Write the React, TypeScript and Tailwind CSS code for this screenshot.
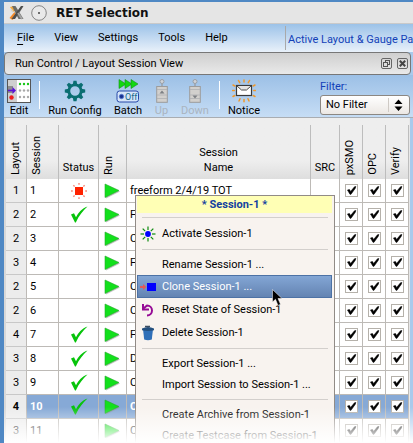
import React from "react";

type Status = "active" | "done" | "none";

interface Session {
  layout: number;
  id: number;
  status: Status;
  name: string;
  selected?: boolean;
}

const sessions: Session[] = [
  { layout: 1, id: 1, status: "active", name: "freeform 2/4/19 TOT" },
  { layout: 2, id: 2, status: "done", name: "F" },
  { layout: 2, id: 3, status: "none", name: "C" },
  { layout: 3, id: 4, status: "none", name: "F" },
  { layout: 2, id: 5, status: "none", name: "C" },
  { layout: 2, id: 6, status: "none", name: "C" },
  { layout: 4, id: 7, status: "done", name: "F" },
  { layout: 3, id: 8, status: "done", name: "D" },
  { layout: 3, id: 9, status: "done", name: "C" },
  { layout: 4, id: 10, status: "done", name: "C", selected: true },
  { layout: 3, id: 11, status: "none", name: "C" },
];

const rayAngles = [0, 45, 90, 135, 180, 225, 270, 315];

function LogoIcon() {
  return (
    <svg width="16" height="16" viewBox="0 0 16 16" aria-hidden="true">
      <path d="M1 2l4-1 2 4-3 2z" fill="#f3a93c" />
      <path d="M0.5 13l5-6 2 4-4 4z" fill="#f08a2a" />
      <path d="M10 3l4-1-3 5z" fill="#b9b9b9" />
      <path d="M3 1h3.5l8 13h-5z" fill="#6b6b66" />
      <path d="M12 1h2.5L6 14H2.5z" fill="#4e4e4c" />
      <path d="M9 8l4 6" stroke="#a6a6a6" strokeWidth="2" />
      <path d="M2 4l2 3" stroke="#d9d3c4" strokeWidth="1.5" />
    </svg>
  );
}

function EditIcon() {
  return (
    <svg width="24" height="24" viewBox="0 0 24 24" aria-hidden="true">
      <rect x="0.5" y="0.5" width="23" height="23" fill="#ffffff" stroke="#555555" />
      <rect x="1" y="1" width="9" height="22" fill="#cfcfcf" />
      <rect x="1" y="7" width="5" height="7" fill="#8e8e8e" />
      <path d="M1 11.5h6" stroke="#5a10d8" strokeWidth="1.6" />
      <path d="M5.5 8l3.5 3.5L5.5 15z" fill="#5a10d8" />
      <circle cx="4.5" cy="18.5" r="2.2" fill="#ee1c1c" />
      {[13, 17, 21].map((x) => (
        <g key={x}>
          <circle cx={x} cy="5" r="1.2" fill="#19c619" />
          <circle cx={x} cy="11.5" r="1.2" fill="#a8a8a8" />
          <circle cx={x} cy="18" r="1.2" fill="#a8a8a8" />
        </g>
      ))}
    </svg>
  );
}

function GearIcon() {
  return (
    <svg width="22" height="24" viewBox="-11 -12 22 24" aria-hidden="true">
      <g fill="#0b6e72">
        {rayAngles.map((a) => (
          <path key={a} d="M-2.2 -6.5L-1.5 -10.2H1.5L2.2 -6.5z" transform={`rotate(${a})`} />
        ))}
      </g>
      <circle r="6.2" fill="none" stroke="#0b6e72" strokeWidth="2.8" />
    </svg>
  );
}

function BatchIcon() {
  return (
    <svg width="24" height="24" viewBox="0 0 24 24" aria-hidden="true">
      <g fill="#12d812" stroke="#178f17" strokeWidth="0.6">
        <path d="M3 0.5l7 4.5-7 4.5z" />
        <path d="M9 0.5l7 4.5-7 4.5z" />
        <path d="M15 0.5l7 4.5-7 4.5z" />
      </g>
      <rect x="1" y="12" width="21.5" height="11" rx="2.5" fill="#d5e5f9" stroke="#2749a8" />
      <circle cx="5.5" cy="17.5" r="2.2" fill="#17308f" stroke="#5f7fd0" />
      <text x="9" y="21" fontSize="9" fontFamily="Roboto, sans-serif" fill="#176a8a">
        Off
      </text>
    </svg>
  );
}

function LiftIcon({ down = false }: { down?: boolean }) {
  return (
    <svg width="12" height="24" viewBox="0 0 12 24" aria-hidden="true">
      <circle cx="6" cy="2.5" r="2" fill="#cfd3d8" stroke="#9b9fa5" />
      <path d="M6 4.5V8" stroke="#9b9fa5" strokeWidth="1.4" />
      <rect x="0.7" y="7.5" width="10.6" height="15.8" fill="#d2d0cd" stroke="#9c9c9c" />
      <path d="M1 10.5h10M1 16h10M1 19.5h10" stroke="#aeb0b2" strokeWidth="0.8" />
      <path d={down ? "M3.5 16.5h5L6 19.5z" : "M3.5 14.5h5L6 11.5z"} fill="#7d8084" />
    </svg>
  );
}

function NoticeIcon() {
  return (
    <svg width="24" height="24" viewBox="0 0 24 24" aria-hidden="true">
      <g stroke="#f0992c" strokeWidth="1.5" strokeLinecap="round">
        <path d="M12 1v2M6.5 1.5l1.2 2.2M17.5 1.5l-1.2 2.2M1 6l1.8 1M23 6l-1.8 1M0.5 11.5h1.8M21.7 11.5h1.8M1 17.5l1.8-1M23 17.5l-1.8-1M7 22l1-2.3M12 22.8v-2.3M17 22l-1-2.3" />
      </g>
      <rect x="4.5" y="6.5" width="15" height="10" fill="#ffffff" stroke="#3a3a3a" strokeWidth="1.2" />
      <path d="M5 7l4.5 4h5L19 7" fill="#e3e3e3" stroke="#4a4a4a" />
    </svg>
  );
}

function RedBurst() {
  return (
    <svg width="18" height="18" viewBox="-9 -9 18 18" aria-hidden="true">
      <rect x="-4" y="-4" width="8" height="8" fill="#ff2200" />
      {rayAngles.map((a) => (
        <path key={a} d="M0 -6.2V-8" stroke="#f58a7a" strokeWidth="1.4" transform={`rotate(${a})`} />
      ))}
    </svg>
  );
}

function StatusCheck() {
  return (
    <svg width="18" height="17" viewBox="0 0 18 17" aria-hidden="true">
      <path
        d="M1 8.5L4 7.3L6 11.2C8.5 6.5 12 2.5 17.5 0.5C13 4.5 9 9.5 5.8 16.5H5z"
        fill="#06c40a"
      />
    </svg>
  );
}

function RunArrow() {
  return (
    <svg width="17" height="16" viewBox="0 0 17 16" aria-hidden="true">
      <path d="M2 2l14 6.5-14 7z" fill="#8c8c8c" opacity="0.5" />
      <path d="M1 1l14 6.5-14 7z" fill="#12e01c" stroke="#27a82b" strokeWidth="0.6" />
    </svg>
  );
}

function ActivateIcon() {
  return (
    <svg width="16" height="16" viewBox="-8 -8 16 16" aria-hidden="true">
      {rayAngles.map((a) => (
        <path key={a} d="M0 -4V-7.5" stroke="#0b8a0b" strokeWidth="1.2" transform={`rotate(${a})`} />
      ))}
      <circle r="2.9" fill="#0000ff" />
    </svg>
  );
}

function CloneIcon() {
  return (
    <svg width="16" height="16" viewBox="0 0 16 16" aria-hidden="true">
      <path d="M0 8h3" stroke="#e05a5a" strokeWidth="2" />
      <path d="M3 5l3.5 3L3 11z" fill="#e05a5a" />
      <rect x="7" y="4" width="9" height="8" fill="#0000ff" />
    </svg>
  );
}

function ResetIcon() {
  return (
    <svg width="16" height="16" viewBox="0 0 16 16" aria-hidden="true">
      <path d="M3.5 6.5L7 3.5A4.8 4.8 0 1 1 7 13.5" fill="none" stroke="#960a96" strokeWidth="2" />
      <path d="M3 2v5.5h6" fill="none" stroke="#960a96" strokeWidth="2" />
    </svg>
  );
}

function TrashIcon() {
  return (
    <svg width="16" height="16" viewBox="0 0 16 16" aria-hidden="true">
      <path d="M3 4h10l-1.2 10.5q-3.8 1.5-7.6 0z" fill="#2f6fb8" />
      <path d="M2 3.5q6-3 12 0v1.7q-6 1.5-12 0z" fill="#24507f" />
      <path d="M5 1.5h5" stroke="#3c4f63" strokeWidth="1.5" />
    </svg>
  );
}

function Tick({ label }: { label: string }) {
  return (
    <span className="mx-auto grid size-[13px] place-items-center">
      <input
        type="checkbox"
        defaultChecked
        aria-label={label}
        className="col-start-1 row-start-1 size-[13px] appearance-none border border-[#b5b1aa] bg-white"
      />
      <svg
        width="11"
        height="11"
        viewBox="0 0 11 11"
        className="pointer-events-none col-start-1 row-start-1"
        aria-hidden="true"
      >
        <path
          d="M1.5 5L3.5 4.6L4.6 6.5L8.5 1.8L9.8 1.5L9.3 3.2L5 9.3H4z"
          fill="#000000"
          stroke="#000000"
          strokeWidth="0.6"
        />
      </svg>
    </span>
  );
}

function ToolButton({
  label,
  width,
  disabled,
  children,
}: {
  label: string;
  width: string;
  disabled?: boolean;
  children: React.ReactNode;
}) {
  return (
    <button
      type="button"
      disabled={disabled}
      className={`flex flex-col items-center whitespace-nowrap disabled:text-[#aab4bf] ${width}`}
    >
      {children}
      <span className="leading-4">{label}</span>
    </button>
  );
}

function ToolDivider() {
  return <span className="mt-0.5 h-7 w-px bg-white" />;
}

function HeaderCell({ label, vertical }: { label: React.ReactNode; vertical?: boolean }) {
  return (
    <th scope="col" className="h-[61px] p-0 align-bottom font-normal">
      <div
        className={`flex h-[54px] items-end border-r border-[#bdbdbd] pb-1 ${
          vertical ? "justify-start pl-0.5" : "justify-center"
        }`}
      >
        {vertical ? (
          <span className="rotate-180 leading-4 whitespace-nowrap [writing-mode:vertical-rl]">{label}</span>
        ) : (
          <span className="leading-[15px]">{label}</span>
        )}
      </div>
    </th>
  );
}

function SessionTable() {
  const cell = "border-r border-b border-[#bdbab6] p-0";
  return (
    <table className="w-full table-fixed border-separate border-spacing-0 bg-white">
      <colgroup>
        <col className="w-[21px]" />
        <col className="w-[32px]" />
        <col className="w-[40px]" />
        <col className="w-[28px]" />
        <col />
        <col className="w-[29px]" />
        <col className="w-[23px]" />
        <col className="w-[23px]" />
        <col className="w-[23px]" />
      </colgroup>
      <thead className="bg-linear-to-b from-[#eeeeee] from-70% to-[#dedede]">
        <tr>
          <HeaderCell label="Layout" vertical />
          <HeaderCell label="Session" vertical />
          <HeaderCell label="Status" />
          <HeaderCell label="Run" vertical />
          <HeaderCell
            label={
              <>
                Session
                <br />
                Name
              </>
            }
          />
          <HeaderCell label="SRC" />
          <HeaderCell label="pxSMO" vertical />
          <HeaderCell label="OPC" vertical />
          <HeaderCell label="Verify" vertical />
        </tr>
      </thead>
      <tbody>
        {sessions.map((s) => (
          <tr key={s.id} className={`h-6 ${s.selected ? "bg-[#86a9d6] font-bold text-white" : ""}`}>
            <th
              scope="row"
              className={`border-r border-b border-r-[#bdbab6] border-b-[#c8c8c8] bg-[#ececec] p-0 pt-0.5 text-center text-black ${
                s.selected ? "font-bold" : "font-normal"
              }`}
            >
              {s.layout}
            </th>
            <td className={`${cell} pt-0.5 pl-[3px]`}>{s.id}</td>
            <td className={cell}>
              <div className="flex justify-center">
                {s.status === "active" && <RedBurst />}
                {s.status === "done" && <StatusCheck />}
              </div>
            </td>
            <td className={cell}>
              <button type="button" aria-label={`Run session ${s.id}`} className="mx-auto block">
                <RunArrow />
              </button>
            </td>
            <td className={`${cell} pt-0.5 pl-[3px] whitespace-nowrap`}>{s.name}</td>
            <td className={cell} />
            {["pxSMO", "OPC", "Verify"].map((step) => (
              <td key={step} className={cell}>
                <Tick label={`${step} for session ${s.id}`} />
              </td>
            ))}
          </tr>
        ))}
      </tbody>
    </table>
  );
}

function MenuItem({
  label,
  icon,
  highlighted,
}: {
  label: string;
  icon?: React.ReactNode;
  highlighted?: boolean;
}) {
  return (
    <button
      type="button"
      role="menuitem"
      className={`flex w-full items-center border pl-0.5 text-left whitespace-nowrap ${icon ? "h-[23px]" : "h-[21px]"} ${
        highlighted
          ? "border-[#4d72a5] bg-linear-to-b from-[#83a6d5] to-[#6484b2] text-white"
          : "border-transparent"
      }`}
    >
      <span className="w-[22px] shrink-0">{icon}</span>
      <span className="pt-0.5">{label}</span>
    </button>
  );
}

function MenuRule() {
  return (
    <div role="separator" className="py-1 pr-1 pl-[5px]">
      <div className="h-px bg-[#d3cfcc]" />
    </div>
  );
}

function ContextMenu() {
  return (
    <div
      role="menu"
      aria-label="Session-1"
      className="absolute top-[195px] left-[135px] w-[200px] border border-[#918b86] bg-[#f8f3ef] pr-0.5 pl-px"
    >
      <div className="bg-[#ffffb5] pt-px text-center leading-4 font-bold text-[#123ea0]">* Session-1 *</div>
      <MenuRule />
      <MenuItem label="Activate Session-1" icon={<ActivateIcon />} />
      <MenuRule />
      <MenuItem label="Rename Session-1 ..." />
      <MenuItem label="Clone Session-1 ..." icon={<CloneIcon />} highlighted />
      <MenuItem label="Reset State of Session-1" icon={<ResetIcon />} />
      <MenuItem label="Delete Session-1" icon={<TrashIcon />} />
      <MenuRule />
      <MenuItem label="Export Session-1 ..." />
      <MenuItem label="Import Session to Session-1 ..." />
      <MenuRule />
      <MenuItem label="Create Archive from Session-1" />
      <MenuItem label="Create Testcase from Session-1" />
    </div>
  );
}

export default function App() {
  return (
    <div className="relative h-screen overflow-hidden border-t-2 border-l-4 border-[#4f88c4] bg-[#a9caec] font-[Roboto,'Noto_Sans',sans-serif] text-[11px] text-black">
      <header className="flex h-[22px] items-center border-b border-[#c9c9c9] bg-[#e5e5e5] pl-[5px]">
        <LogoIcon />
        <button type="button" aria-label="Window menu" className="ml-1.5">
          <svg width="16" height="16" viewBox="0 0 16 16" aria-hidden="true">
            <circle cx="8" cy="8" r="7.3" fill="#e9e9e9" stroke="#858585" />
            <circle cx="8" cy="8" r="1" fill="#444444" />
          </svg>
        </button>
        <h1 className="ml-[9px] font-['DejaVu_Sans',sans-serif] text-[12px] font-bold text-[#111111]">RET Selection</h1>
      </header>

      <div className="flex h-7 items-center bg-linear-to-b from-[#9cc2e8] to-[#e9f1fa]">
        <nav className="flex w-[281px] shrink-0 gap-5 pl-[13px]">
          <button type="button">
            <span className="underline underline-offset-3">F</span>ile
          </button>
          <button type="button">View</button>
          <button type="button">Settings</button>
          <button type="button">Tools</button>
          <button type="button">Help</button>
        </nav>
        <div className="flex h-6 items-center overflow-hidden border-l border-[#a9a9a9] pt-1 pl-0.5">
          <a href="#layout" className="whitespace-nowrap text-[#123fb8]">
            Active Layout &amp; Gauge Pa
          </a>
        </div>
      </div>

      <div className="mr-0.5 flex h-[23px] items-center gap-[5px] rounded-sm border border-[#777777] bg-linear-to-b from-[#cfcfcf] to-[#e9e9e9] pr-0.5 pl-2.5">
        <h2 className="mr-auto pt-0.5">Run Control / Layout Session View</h2>
        <button type="button" aria-label="Float panel">
          <svg width="11" height="11" viewBox="0 0 11 11" aria-hidden="true">
            <rect x="0.5" y="0.5" width="10" height="10" rx="1.5" fill="none" stroke="#666666" />
            <rect x="4.5" y="2.5" width="4" height="4" fill="none" stroke="#555555" />
            <rect x="2.5" y="4.5" width="4" height="4" fill="#dddddd" stroke="#555555" />
          </svg>
        </button>
        <button type="button" aria-label="Close panel">
          <svg width="11" height="11" viewBox="0 0 11 11" aria-hidden="true">
            <rect x="0.5" y="0.5" width="10" height="10" rx="1.5" fill="none" stroke="#666666" />
            <path d="M2.8 2.8l5.4 5.4M8.2 2.8l-5.4 5.4" stroke="#444444" strokeWidth="2" />
          </svg>
        </button>
      </div>

      <div className="flex h-[43px] items-start gap-2 border-b border-[#a9adb2] bg-linear-to-b from-[#9cc0e6] to-[#c6ddf5] pt-1 pr-[3px] pl-[3px]">
        <ToolButton label="Edit" width="w-6">
          <EditIcon />
        </ToolButton>
        <ToolDivider />
        <div className="flex gap-3 pr-0.5">
          <ToolButton label="Run Config" width="w-[54px]">
            <GearIcon />
          </ToolButton>
          <ToolButton label="Batch" width="w-7">
            <BatchIcon />
          </ToolButton>
          <ToolButton label="Up" width="w-[15px]" disabled>
            <LiftIcon />
          </ToolButton>
          <ToolButton label="Down" width="w-7" disabled>
            <LiftIcon down />
          </ToolButton>
        </div>
        <ToolDivider />
        <ToolButton label="Notice" width="w-8">
          <NoticeIcon />
        </ToolButton>
        <div className="ml-auto flex w-[90px] flex-col">
          <label htmlFor="filter" className="leading-4 text-[#123fb8]">
            Filter:
          </label>
          <div className="grid items-center">
            <select
              id="filter"
              className="col-start-1 row-start-1 h-5 appearance-none rounded-[3px] border border-[#8c8782] bg-linear-to-b from-white to-[#ece8e4] pl-[5px]"
            >
              <option>No Filter</option>
            </select>
            <svg
              width="22"
              height="14"
              viewBox="0 0 22 14"
              className="pointer-events-none col-start-1 row-start-1 justify-self-end"
              aria-hidden="true"
            >
              <path d="M0.5 0v14" stroke="#cfcac5" />
              <path d="M6.5 6L10.5 1.5L14.5 6zM6.5 8.5L10.5 13L14.5 8.5z" fill="#000000" />
            </svg>
          </div>
        </div>
      </div>

      <main className="mr-[3px] border-r border-l-2 border-r-[#e8e8e8] border-l-[#d8d8d8]">
        <SessionTable />
      </main>

      <div className="pointer-events-none absolute -top-0.5 -left-1">
        <div className="pointer-events-auto">
          <ContextMenu />
        </div>
        <svg
          width="12"
          height="18"
          viewBox="0 0 12 18"
          className="absolute top-[289px] left-[272px]"
          aria-hidden="true"
        >
          <path
            d="M0.5 0.5V13L3.5 10.3L6 16.5L8.5 15.3L6 9.5H10z"
            fill="#000000"
            stroke="#ffffff"
            strokeWidth="0.5"
          />
        </svg>
      </div>

      <div className="pointer-events-none absolute right-0 bottom-0 -left-1 h-10 bg-linear-to-b from-transparent from-10% to-white" />
    </div>
  );
}
